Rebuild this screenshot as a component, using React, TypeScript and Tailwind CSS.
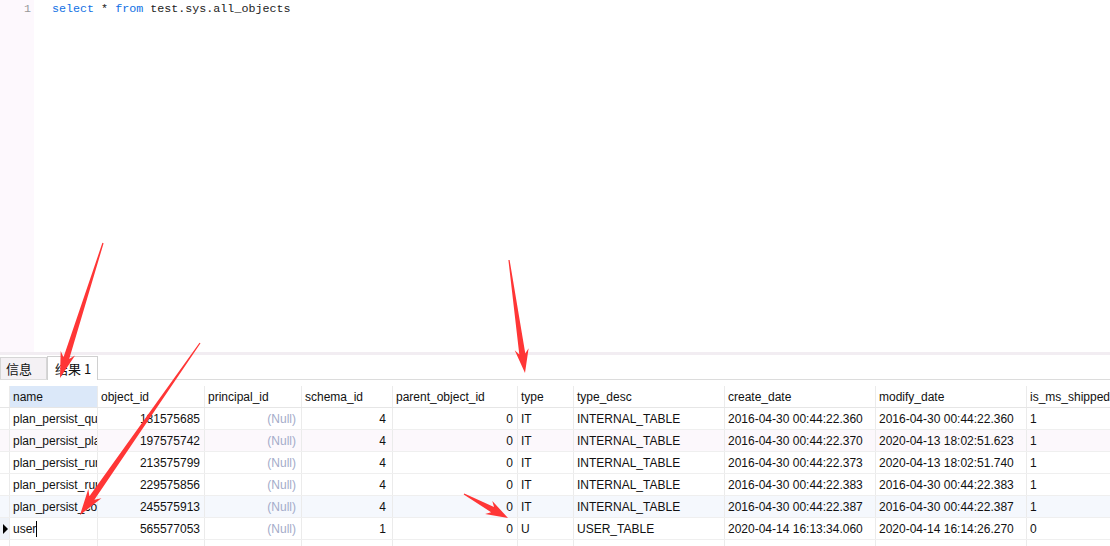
const cols = [
  { key: "name", label: "name", w: 88, align: "left" },
  { key: "object_id", label: "object_id", w: 107, align: "right" },
  { key: "principal_id", label: "principal_id", w: 97, align: "right" },
  { key: "schema_id", label: "schema_id", w: 91, align: "right" },
  { key: "parent_object_id", label: "parent_object_id", w: 125, align: "right" },
  { key: "type", label: "type", w: 56, align: "left" },
  { key: "type_desc", label: "type_desc", w: 151, align: "left" },
  { key: "create_date", label: "create_date", w: 151, align: "left" },
  { key: "modify_date", label: "modify_date", w: 151, align: "left" },
  { key: "is_ms_shipped", label: "is_ms_shipped", w: 120, align: "left" },
];

const rows = [
  ["plan_persist_query", "181575685", null, "4", "0", "IT", "INTERNAL_TABLE", "2016-04-30 00:44:22.360", "2016-04-30 00:44:22.360", "1"],
  ["plan_persist_plan", "197575742", null, "4", "0", "IT", "INTERNAL_TABLE", "2016-04-30 00:44:22.370", "2020-04-13 18:02:51.623", "1"],
  ["plan_persist_runtime", "213575799", null, "4", "0", "IT", "INTERNAL_TABLE", "2016-04-30 00:44:22.373", "2020-04-13 18:02:51.740", "1"],
  ["plan_persist_runtime", "229575856", null, "4", "0", "IT", "INTERNAL_TABLE", "2016-04-30 00:44:22.383", "2016-04-30 00:44:22.383", "1"],
  ["plan_persist_context", "245575913", null, "4", "0", "IT", "INTERNAL_TABLE", "2016-04-30 00:44:22.387", "2016-04-30 00:44:22.387", "1"],
  ["user", "565577053", null, "1", "0", "U", "USER_TABLE", "2020-04-14 16:13:34.060", "2020-04-14 16:14:26.270", "0"],
];

const rowBg = ["bg-white", "bg-[#fcf8fc]", "bg-white", "bg-white", "bg-[#f5f8fd]", "bg-white"];

const arrows = [
  { x1: 103, y1: 243, x2: 60, y2: 378, hl: 26, hw: 15 },
  { x1: 200, y1: 343, x2: 80, y2: 515, hl: 26, hw: 16 },
  { x1: 509, y1: 260, x2: 525, y2: 373, hl: 24, hw: 14 },
  { x1: 464, y1: 494, x2: 508, y2: 518, hl: 22, hw: 15 },
];

function arrowPoints(a: { x1: number; y1: number; x2: number; y2: number; hl: number; hw: number }) {
  const dx = a.x2 - a.x1;
  const dy = a.y2 - a.y1;
  const len = Math.hypot(dx, dy);
  const ux = dx / len;
  const uy = dy / len;
  const nx = -uy;
  const ny = ux;
  const bx = a.x2 - ux * a.hl;
  const by = a.y2 - uy * a.hl;
  const cx = a.x2 - ux * a.hl * 0.8;
  const cy = a.y2 - uy * a.hl * 0.8;
  const w0 = 0.6;
  const w1 = 3;
  const p = [
    [a.x1 + nx * w0, a.y1 + ny * w0],
    [cx + nx * w1, cy + ny * w1],
    [bx + (nx * a.hw) / 2, by + (ny * a.hw) / 2],
    [a.x2, a.y2],
    [bx - (nx * a.hw) / 2, by - (ny * a.hw) / 2],
    [cx - nx * w1, cy - ny * w1],
    [a.x1 - nx * w0, a.y1 - ny * w0],
  ];
  return p.map((q) => `${q[0].toFixed(1)},${q[1].toFixed(1)}`).join(" ");
}

const Cell = ({ w, align, children, className = "" }: { w: number; align: string; children?: React.ReactNode; className?: string }) => (
  <div
    style={{ width: w }}
    className={`shrink-0 h-full flex items-center border-r border-[#ebebeb] overflow-hidden whitespace-nowrap ${
      align === "right" ? "justify-end pr-[4px]" : "pl-[3px]"
    } ${className}`}
  >
    {children}
  </div>
);

export default function App() {
  return (
    <div className="relative w-[1110px] h-[546px] overflow-hidden bg-white font-['Liberation_Sans',sans-serif] text-[12px] text-[#111]">
      {/* editor */}
      <div className="flex h-[352px]">
        <div className="w-[34px] bg-[#fdf8fd] text-right pr-[3px] pt-[1px] text-[#999] font-['Liberation_Mono',monospace] text-[11.7px] leading-[16px]">
          1
        </div>
        <div className="pl-[18px] pt-[1px] font-['Liberation_Mono',monospace] text-[11.7px] leading-[16px] text-[#222]">
          <span className="text-[#1170e4]">select</span> * <span className="text-[#1170e4]">from</span> test.sys.all_objects
        </div>
      </div>
      {/* splitter */}
      <div className="h-[3px] bg-[#f2edf2]" />
      {/* tabs */}
      <div className="flex items-end h-[25px] border-b border-[#dcdcdc] font-['Noto_Sans_CJK_SC',sans-serif] text-[13px]">
        <div className="w-[47px] h-[22px] bg-[#f4f1f4] border border-b-0 border-[#d6d6d6] flex items-center pl-[5px]">信息</div>
        <div className="w-[51px] h-[24px] bg-white border border-b-0 border-[#d0d0d0] -mb-px flex items-center pl-[7px]">结果 1</div>
      </div>
      {/* grid */}
      <div className="pt-[6px]">
        <div className="flex h-[22px] border-b border-[#e6e6e6]">
          <div className="w-[10px] shrink-0 border-r border-[#ebebeb]" />
          {cols.map((c, i) => (
            <Cell key={c.key} w={c.w} align="left" className={i === 0 ? "bg-[#dbe8f9]" : ""}>
              {c.label}
            </Cell>
          ))}
        </div>
        {rows.map((r, ri) => (
          <div key={ri} className={`flex h-[22px] border-b border-[#efefef] ${rowBg[ri]}`}>
            <div className={`w-[10px] shrink-0 border-r border-[#ebebeb] flex items-center ${ri === 5 ? "bg-[#eef2f8]" : ""}`}>
              {ri === 5 && <div className="ml-[3px] w-0 h-0 border-y-[5px] border-y-transparent border-l-[5px] border-l-black" />}
            </div>
            {cols.map((c, ci) => {
              const v = r[ci];
              return (
                <Cell key={c.key} w={c.w} align={c.align} className={ci === 3 ? "pr-[6px]" : ci === 4 ? "pr-[3px]" : ""}>
                  {v === null ? <span className="text-[#a3abc9] pr-px">(Null)</span> : v}
                  {ri === 5 && ci === 0 && <span className="inline-block w-px h-[16px] bg-black" />}
                </Cell>
              );
            })}
          </div>
        ))}
        <div className="flex h-[22px]">
          <div className="w-[10px] shrink-0 border-r border-[#ebebeb]" />
          {cols.map((c) => (
            <Cell key={c.key} w={c.w} align="left" />
          ))}
        </div>
      </div>
      {/* annotation arrows */}
      <svg className="absolute inset-0 pointer-events-none" width="1110" height="546">
        {arrows.map((a, i) => (
          <polygon key={i} points={arrowPoints(a)} fill="#ff3636" />
        ))}
      </svg>
    </div>
  );
}
